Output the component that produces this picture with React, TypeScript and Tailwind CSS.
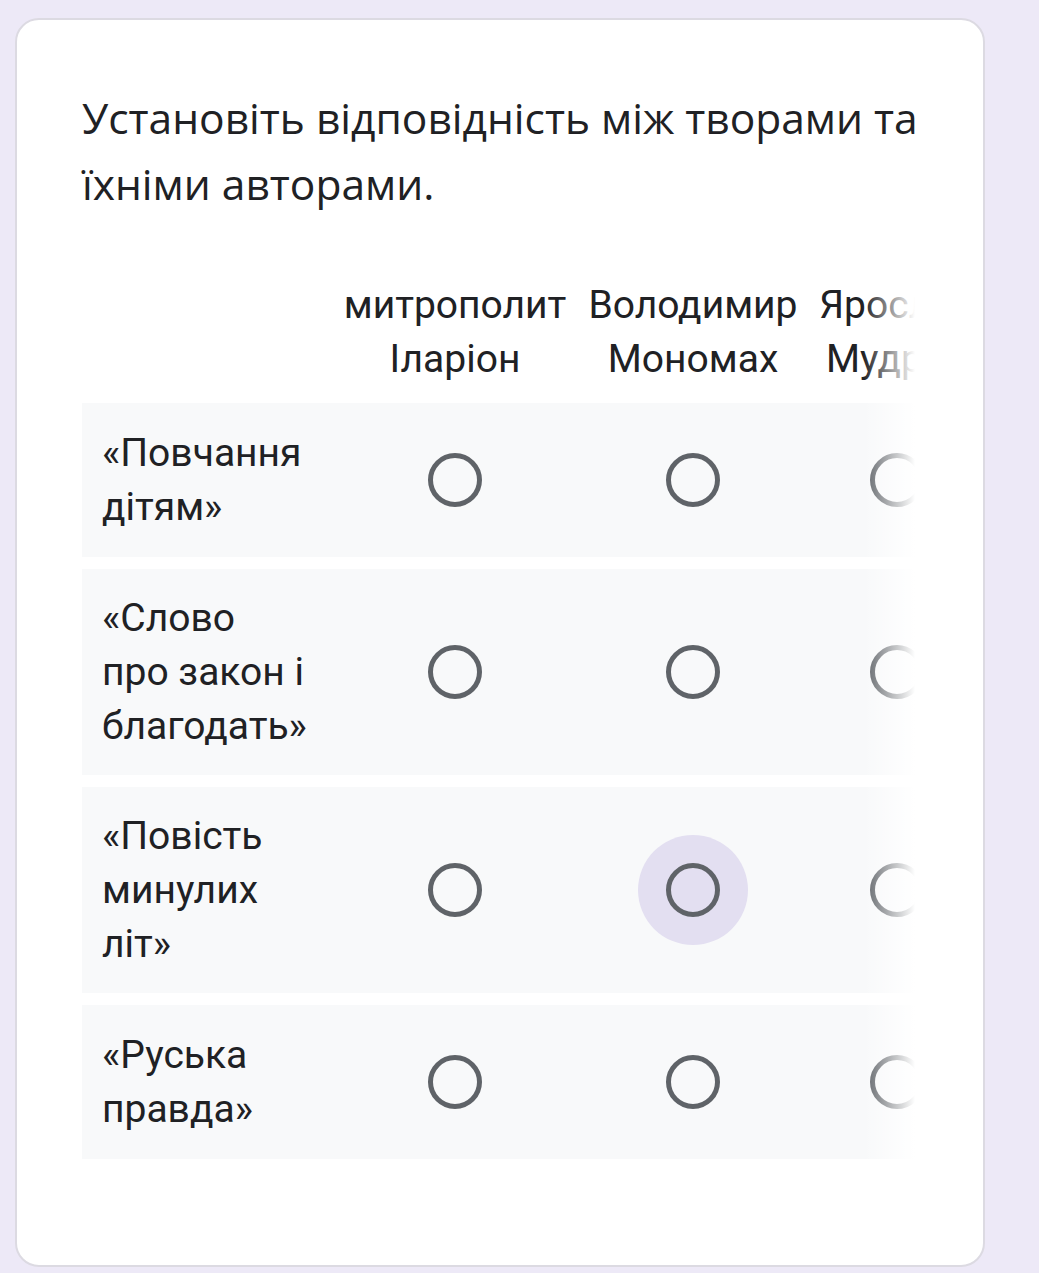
const columns = [
  { title: ['митрополит', 'Іларіон'], width: 'w-[238px]' },
  { title: ['Володимир', 'Мономах'], width: 'w-[238px]' },
  { title: ['Ярослав', 'Мудрий'], width: 'w-[170px]' },
];

const rows = [
  { label: ['«Повчання', 'дітям»'], hovered: -1 },
  { label: ['«Слово', 'про закон і', 'благодать»'], hovered: -1 },
  { label: ['«Повість', 'минулих', 'літ»'], hovered: 1 },
  { label: ['«Руська', 'правда»'], hovered: -1 },
];

function Radio({ hovered }: { hovered: boolean }) {
  return (
    <div
      className={
        'flex items-center justify-center w-[110px] h-[110px] rounded-full ' +
        (hovered ? 'bg-[#e3dff1]' : '')
      }
    >
      <div className="w-[54px] h-[54px] rounded-full border-[5px] border-[#5f6368]" />
    </div>
  );
}

export default function App() {
  return (
    <div className="min-h-[1273px] bg-[#ede9f7] pt-[18px] pl-[15px] pr-[54px]">
      <div
        className="bg-white border-2 border-[#dcdae2] rounded-[24px] h-[1249px] pt-[65px] pl-[65px] pr-[68px]"
        style={{ fontFamily: 'Roboto, "Noto Sans", sans-serif' }}
      >
        <h1
          className="text-[42.5px] leading-[66px] text-[#202124] whitespace-nowrap"
          style={{ fontFamily: '"Open Sans", "Noto Sans", sans-serif' }}
        >
          Установіть відповідність між творами та
          <br />
          їхніми авторами.
        </h1>

        <div className="relative mt-[61px] overflow-hidden">
          <div className="w-max">
            <div className="flex pb-[17px]">
              <div className="w-[254px] shrink-0" />
              {columns.map((c, i) => (
                <div
                  key={i}
                  className={c.width + ' shrink-0 text-center text-[39px] leading-[54px] text-[#202124] whitespace-nowrap'}
                >
                  {c.title[0]}
                  <br />
                  {c.title[1]}
                </div>
              ))}
            </div>

            <div className="flex flex-col gap-[12px]">
              {rows.map((r, i) => (
                <div key={i} className="flex items-center bg-[#f8f9fa] py-[22px]">
                  <div className="w-[254px] shrink-0 pl-[20px] text-[39px] leading-[54px] text-[#202124] whitespace-nowrap">
                    {r.label.map((l, j) => (
                      <div key={j}>{l}</div>
                    ))}
                  </div>
                  {columns.map((c, j) => (
                    <div key={j} className={c.width + ' shrink-0 flex justify-center'}>
                      <Radio hovered={r.hovered === j} />
                    </div>
                  ))}
                </div>
              ))}
            </div>
          </div>

          <div className="absolute top-0 right-0 bottom-0 w-[52px] bg-gradient-to-r from-white/0 to-white pointer-events-none" />
        </div>
      </div>
    </div>
  );
}
